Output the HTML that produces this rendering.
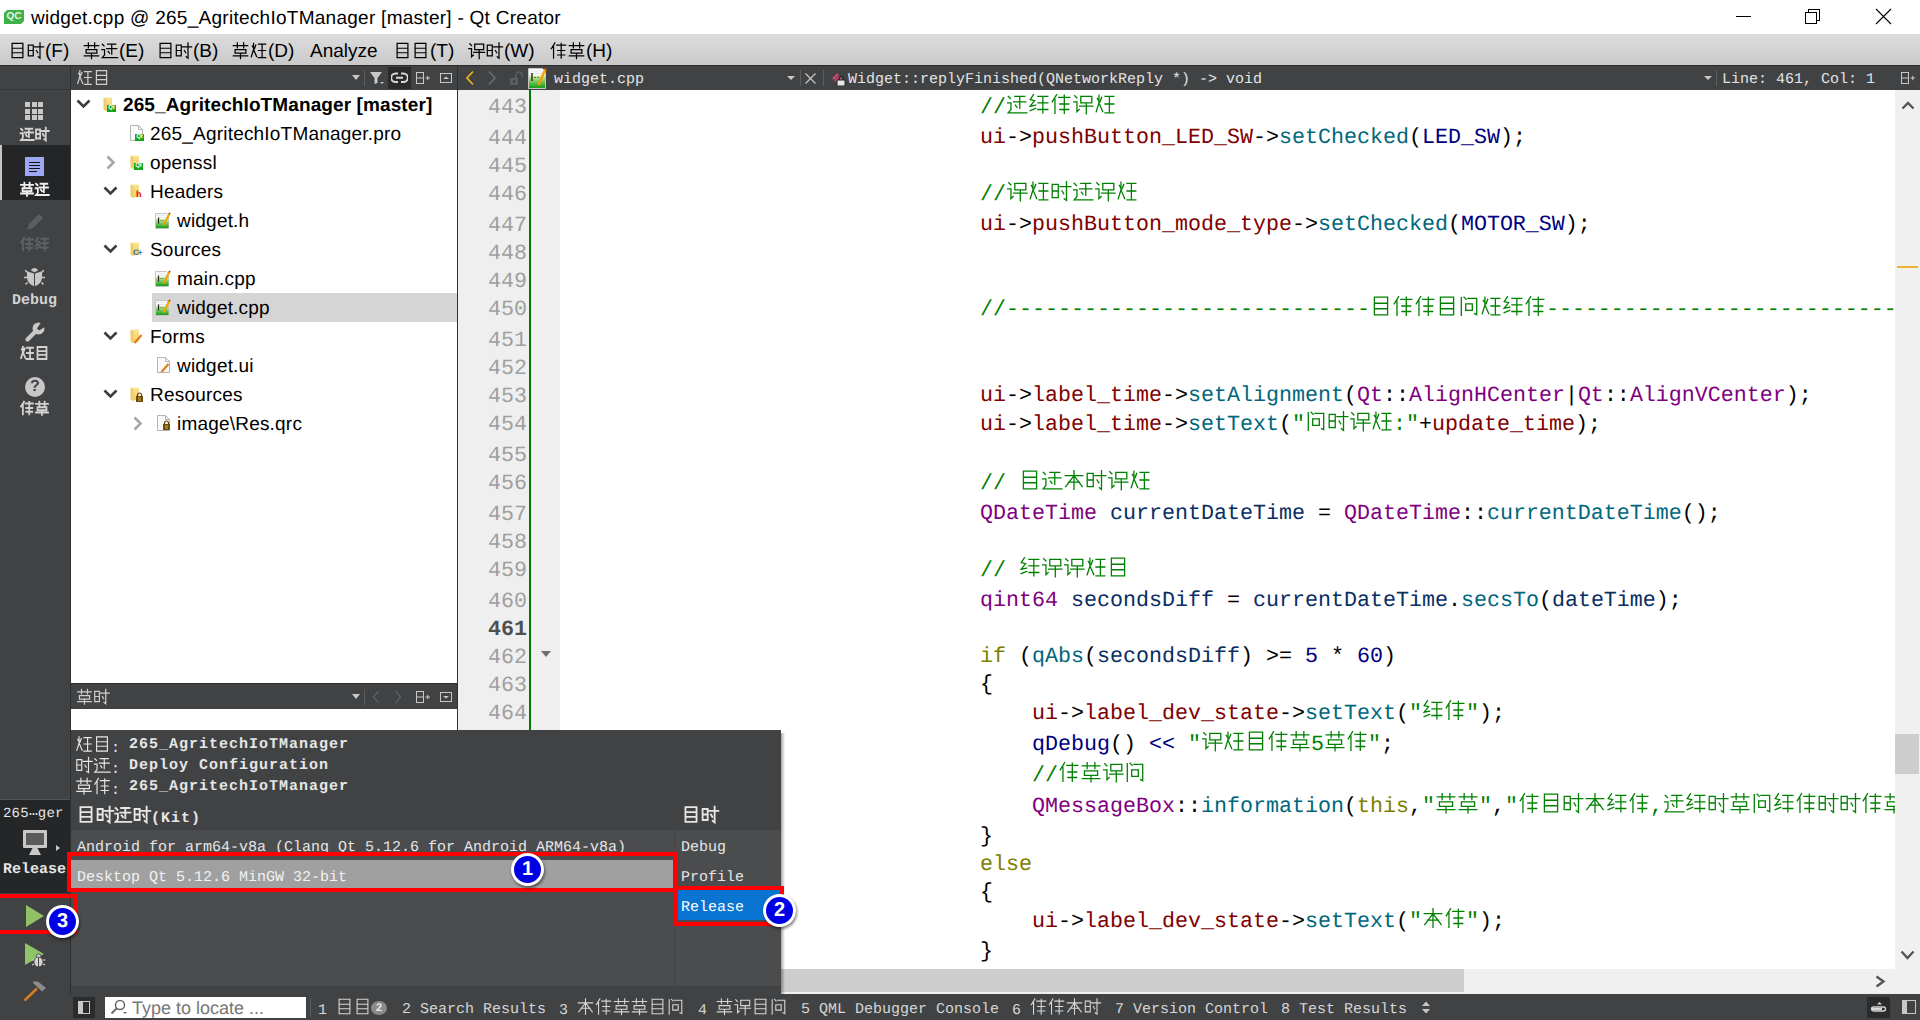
<!DOCTYPE html>
<html><head><meta charset="utf-8"><style>
*{margin:0;padding:0;box-sizing:border-box}
html,body{width:1920px;height:1020px;overflow:hidden;background:#fff;position:relative}
body{font-family:"Liberation Sans",sans-serif;color:#000;text-rendering:geometricPrecision}
.a{position:absolute}
.nw{white-space:nowrap}
.cg{display:inline-block;overflow:visible}
.cr{position:relative;white-space:nowrap}
.ct{position:absolute;left:0;top:0;width:100%;overflow:hidden;color:transparent;font-size:1px;line-height:1px}
.mono{font-family:"Liberation Mono",monospace}
.tb{font-family:"Liberation Mono",monospace;font-size:15px;line-height:25px;color:#e4e4e4;white-space:nowrap}
.code{font-family:"Liberation Mono",monospace;font-size:21.67px;line-height:28px;white-space:pre}
.ln{font-family:"Liberation Mono",monospace;font-size:21.67px;line-height:28px;color:#9f9f9f;text-align:right;width:70px}
.c{color:#008000}
.m{color:#800000}
.f{color:#00677c}
.g{color:#000080}
.t{color:#800080}
.v{color:#092e64}
.k{color:#808000}
.s{color:#008000}
.tr{font-size:19px;line-height:29px;white-space:nowrap;letter-spacing:0.2px}
.pp{font-family:"Liberation Mono",monospace;font-size:15px;line-height:20px;color:#e6e6e6;white-space:pre}
.pb{font-weight:bold;letter-spacing:1px}
.sb{font-family:"Liberation Mono",monospace;font-size:15px;line-height:25px;color:#d6d6d6;white-space:pre}
.badge{position:absolute;width:33px;height:33px;border-radius:50%;background:#fff;box-shadow:1px 2px 3px rgba(0,0,0,.5)}
.badge i{position:absolute;left:3px;top:3px;width:27px;height:27px;border-radius:50%;background:#0000e6;color:#fff;font:bold 20px/27px "Liberation Sans",sans-serif;text-align:center;font-style:normal}
</style></head>
<body>
<svg width="0" height="0" style="position:absolute"><defs><linearGradient id="gg1" x1="0" y1="0" x2="0" y2="1"><stop offset="0" stop-color="#d6efa4"/><stop offset="1" stop-color="#139c13"/></linearGradient><linearGradient id="fg1" x1="0" y1="0" x2="0" y2="1"><stop offset="0" stop-color="#f9e49a"/><stop offset="1" stop-color="#f0cd62"/></linearGradient><symbol id="cg0" viewBox="0 0 20 20" overflow="visible"><path d="M4 2H16V18H4Z M4 7.5H16 M4 12.5H16" fill="none" stroke="currentColor" stroke-linecap="square"/></symbol><symbol id="cg1" viewBox="0 0 20 20" overflow="visible"><path d="M6 1.5L2 8 M4.5 5.5V18.5 M8 4H18 M13 2V18.5 M9 10H17 M9 15H17" fill="none" stroke="currentColor" stroke-linecap="square"/></symbol><symbol id="cg2" viewBox="0 0 20 20" overflow="visible"><path d="M2.5 2.5L4.5 4.5 M1.5 8H4.5V17L6.5 15 M8 3H18V9H8Z M7 12H19 M13 9V19" fill="none" stroke="currentColor" stroke-linecap="square"/></symbol><symbol id="cg3" viewBox="0 0 20 20" overflow="visible"><path d="M2 6H18 M10 1.5V18.5 M10 6L2.5 16 M10 6L17.5 16 M5 12H15" fill="none" stroke="currentColor" stroke-linecap="square"/></symbol><symbol id="cg4" viewBox="0 0 20 20" overflow="visible"><path d="M3 2.5V18.5 M5.5 2L7.5 4 M9 3H17V18L15 17 M7 8H13V14H7Z" fill="none" stroke="currentColor" stroke-linecap="square"/></symbol><symbol id="cg5" viewBox="0 0 20 20" overflow="visible"><path d="M2 4H7.5V16H2Z M2 10H7.5 M9 6H19 M15 1.5V18.5L13 17 M11 10L12.5 12.5" fill="none" stroke="currentColor" stroke-linecap="square"/></symbol><symbol id="cg6" viewBox="0 0 20 20" overflow="visible"><path d="M3 5L5 8 M7 4L5.5 8 M4.5 2V9L2 17 M4.5 9L8 17 M10 3H18 M14 3V18 M10 10H18 M10 18H18" fill="none" stroke="currentColor" stroke-linecap="square"/></symbol><symbol id="cg7" viewBox="0 0 20 20" overflow="visible"><path d="M2 4.5H18 M6.5 1.5V7 M13.5 1.5V7 M4 9H16V13H4Z M2 16H18 M10 13V19" fill="none" stroke="currentColor" stroke-linecap="square"/></symbol><symbol id="cg8" viewBox="0 0 20 20" overflow="visible"><path d="M2 3L4 5 M1.5 9H4.5V15L2 18H19 M8 3H17 M12.5 3V14 M7 8H18 M8.5 11L10 13" fill="none" stroke="currentColor" stroke-linecap="square"/></symbol><symbol id="cg9" viewBox="0 0 20 20" overflow="visible"><path d="M5 1.5L2 6L6 7L2 12L7 11 M2 16L7 14 M9 3H18 M13.5 3V18 M9 9H18 M9 15H18" fill="none" stroke="currentColor" stroke-linecap="square"/></symbol></defs></svg><div class="a" style="left:0;top:0;width:1920px;height:34px;background:#fff"></div><div class="a" style="left:4px;top:10px;width:20px;height:14px;background:#41b24a;clip-path:polygon(3px 0,100% 0,100% 11px,17px 100%,0 100%,0 3px)"></div><div class="a" style="left:5px;top:10px;width:18px;height:14px;color:#e8f5e8;font:bold 10px/14px 'Liberation Sans',sans-serif;text-align:center">QC</div><div class="a nw" id="title" style="left:31px;top:5px;height:28px;font-size:19px;letter-spacing:0.27px;line-height:28px">widget.cpp @ 265_AgritechIoTManager [master] - Qt Creator</div><div class="a" style="left:1736px;top:16px;width:15px;height:1px;background:#000"></div><div class="a" style="left:1808px;top:9px;width:12px;height:12px;border:1px solid #000"></div><div class="a" style="left:1805px;top:12px;width:12px;height:12px;border:1px solid #000;background:#fff"></div><svg class="a" style="left:1875px;top:8px" width="17" height="17"><path d="M1 1L16 16M16 1L1 16" stroke="#000" stroke-width="1.1"/></svg><div class="a" style="left:0;top:34px;width:1920px;height:31px;background:linear-gradient(#dddddd,#c9c9c9)"></div><div class="a nw" style="left:9px;top:38px;height:28px;font-size:19px;line-height:28px"><span class="cr"><svg class="cg" width="18" height="19" viewBox="0.53 0 18.95 20" style="vertical-align:-3px;stroke-width:1.37"><use href="#cg0"/></svg><svg class="cg" width="18" height="19" viewBox="0.53 0 18.95 20" style="vertical-align:-3px;stroke-width:1.37"><use href="#cg5"/></svg><span class="ct">文件</span></span>(F)</div><div class="a nw" style="left:83px;top:38px;height:28px;font-size:19px;line-height:28px"><span class="cr"><svg class="cg" width="18" height="19" viewBox="0.53 0 18.95 20" style="vertical-align:-3px;stroke-width:1.37"><use href="#cg7"/></svg><svg class="cg" width="18" height="19" viewBox="0.53 0 18.95 20" style="vertical-align:-3px;stroke-width:1.37"><use href="#cg8"/></svg><span class="ct">编辑</span></span>(E)</div><div class="a nw" style="left:157px;top:38px;height:28px;font-size:19px;line-height:28px"><span class="cr"><svg class="cg" width="18" height="19" viewBox="0.53 0 18.95 20" style="vertical-align:-3px;stroke-width:1.37"><use href="#cg0"/></svg><svg class="cg" width="18" height="19" viewBox="0.53 0 18.95 20" style="vertical-align:-3px;stroke-width:1.37"><use href="#cg5"/></svg><span class="ct">构建</span></span>(B)</div><div class="a nw" style="left:232px;top:38px;height:28px;font-size:19px;line-height:28px"><span class="cr"><svg class="cg" width="18" height="19" viewBox="0.53 0 18.95 20" style="vertical-align:-3px;stroke-width:1.37"><use href="#cg7"/></svg><svg class="cg" width="18" height="19" viewBox="0.53 0 18.95 20" style="vertical-align:-3px;stroke-width:1.37"><use href="#cg6"/></svg><span class="ct">调试</span></span>(D)</div><div class="a nw" style="left:310px;top:38px;height:28px;font-size:19px;line-height:28px">Analyze</div><div class="a nw" style="left:394px;top:38px;height:28px;font-size:19px;line-height:28px"><span class="cr"><svg class="cg" width="18" height="19" viewBox="0.53 0 18.95 20" style="vertical-align:-3px;stroke-width:1.37"><use href="#cg0"/></svg><svg class="cg" width="18" height="19" viewBox="0.53 0 18.95 20" style="vertical-align:-3px;stroke-width:1.37"><use href="#cg0"/></svg><span class="ct">工具</span></span>(T)</div><div class="a nw" style="left:468px;top:38px;height:28px;font-size:19px;line-height:28px"><span class="cr"><svg class="cg" width="18" height="19" viewBox="0.53 0 18.95 20" style="vertical-align:-3px;stroke-width:1.37"><use href="#cg2"/></svg><svg class="cg" width="18" height="19" viewBox="0.53 0 18.95 20" style="vertical-align:-3px;stroke-width:1.37"><use href="#cg5"/></svg><span class="ct">控件</span></span>(W)</div><div class="a nw" style="left:550px;top:38px;height:28px;font-size:19px;line-height:28px"><span class="cr"><svg class="cg" width="18" height="19" viewBox="0.53 0 18.95 20" style="vertical-align:-3px;stroke-width:1.37"><use href="#cg1"/></svg><svg class="cg" width="18" height="19" viewBox="0.53 0 18.95 20" style="vertical-align:-3px;stroke-width:1.37"><use href="#cg7"/></svg><span class="ct">帮助</span></span>(H)</div><div class="a" style="left:0;top:65px;width:1920px;height:25px;background:#404244"></div><div class="a" style="left:0;top:65px;width:1920px;height:1px;background:#2b2b2b"></div><div class="a" style="left:0;top:90px;width:71px;height:905px;background:#404244"></div><div class="a" style="left:70px;top:65px;width:1px;height:930px;background:#2f3031"></div><div class="a" style="left:0;top:89px;width:71px;height:1px;background:#343537"></div><div class="a" style="left:25.0px;top:102.0px;width:5px;height:5px;background:#c8c8c8"></div><div class="a" style="left:31.5px;top:102.0px;width:5px;height:5px;background:#c8c8c8"></div><div class="a" style="left:38.0px;top:102.0px;width:5px;height:5px;background:#c8c8c8"></div><div class="a" style="left:25.0px;top:108.5px;width:5px;height:5px;background:#c8c8c8"></div><div class="a" style="left:31.5px;top:108.5px;width:5px;height:5px;background:#c8c8c8"></div><div class="a" style="left:38.0px;top:108.5px;width:5px;height:5px;background:#c8c8c8"></div><div class="a" style="left:25.0px;top:115.0px;width:5px;height:5px;background:#c8c8c8"></div><div class="a" style="left:31.5px;top:115.0px;width:5px;height:5px;background:#c8c8c8"></div><div class="a" style="left:38.0px;top:115.0px;width:5px;height:5px;background:#c8c8c8"></div><div class="a nw" style="left:20px;top:126px;height:16px;font-weight:bold;font-size:15px;line-height:16px;color:#d2d2d2"><span class="cr"><svg class="cg" width="15" height="16" viewBox="0.62 0 18.75 20" style="vertical-align:-1px;stroke-width:2.38"><use href="#cg8"/></svg><svg class="cg" width="15" height="16" viewBox="0.62 0 18.75 20" style="vertical-align:-1px;stroke-width:2.38"><use href="#cg5"/></svg><span class="ct">欢迎</span></span></div><div class="a" style="left:0;top:145px;width:70px;height:55px;background:#232526"></div><div class="a" style="left:0;top:145px;width:2px;height:55px;background:#c4c4c4"></div><div class="a" style="left:25px;top:157px;width:19px;height:19px;background:#9da7f3"></div><div class="a" style="left:29px;top:162px;width:11px;height:1px;background:#111"></div><div class="a" style="left:29px;top:165px;width:11px;height:1px;background:#111"></div><div class="a" style="left:29px;top:168px;width:11px;height:1px;background:#111"></div><div class="a" style="left:29px;top:171px;width:8px;height:1px;background:#111"></div><div class="a nw" style="left:20px;top:181px;height:16px;font-weight:bold;font-size:15px;line-height:16px;color:#f0f0f0"><span class="cr"><svg class="cg" width="15" height="16" viewBox="0.62 0 18.75 20" style="vertical-align:-1px;stroke-width:2.38"><use href="#cg7"/></svg><svg class="cg" width="15" height="16" viewBox="0.62 0 18.75 20" style="vertical-align:-1px;stroke-width:2.38"><use href="#cg8"/></svg><span class="ct">编辑</span></span></div><svg class="a" style="left:24px;top:211px" width="22" height="22"><path d="M3 19 L5 13 L15 3 L19 7 L9 17 Z" fill="#5c5d5f"/></svg><div class="a nw" style="left:20px;top:236px;height:16px;font-weight:bold;font-size:15px;line-height:16px;color:#5f6062"><span class="cr"><svg class="cg" width="15" height="16" viewBox="0.62 0 18.75 20" style="vertical-align:-1px;stroke-width:2.38"><use href="#cg1"/></svg><svg class="cg" width="15" height="16" viewBox="0.62 0 18.75 20" style="vertical-align:-1px;stroke-width:2.38"><use href="#cg9"/></svg><span class="ct">设计</span></span></div><svg class="a" style="left:22px;top:264px" width="26" height="26"><path d="M8.7 6.2Q12.5 1.8 16.3 6.2L12.5 8.2Z" fill="#c8c8c8"/><path d="M4.8 7.2L12 9.4V22.2Q5.5 19.5 5 14Z" fill="#c8c8c8"/><path d="M20.2 7.2L13 9.4V22.2Q19.5 19.5 20 14Z" fill="#c8c8c8"/><path d="M5 8L3.2 6.2M20 8L21.8 6.2M5 13.5H2M20 13.5H23M5.5 18.5L3.6 20.3M19.5 18.5L21.4 20.3" stroke="#c8c8c8" stroke-width="1.6"/></svg><div class="a nw" style="left:12px;top:293px;font:bold 15px/16px 'Liberation Mono',monospace;color:#d2d2d2">Debug</div><svg class="a" style="left:24px;top:321px" width="22" height="22"><path d="M3.5 18.5L11.5 10.5" stroke="#c8c8c8" stroke-width="4.2" stroke-linecap="round"/><circle cx="14.5" cy="7.5" r="6" fill="#c8c8c8"/><path d="M13 7.5L17.5 0.5L22.5 5L15 9.5Z" fill="#404244"/></svg><div class="a nw" style="left:20px;top:345px;height:16px;font-weight:bold;font-size:15px;line-height:16px;color:#d2d2d2"><span class="cr"><svg class="cg" width="15" height="16" viewBox="0.62 0 18.75 20" style="vertical-align:-1px;stroke-width:2.38"><use href="#cg6"/></svg><svg class="cg" width="15" height="16" viewBox="0.62 0 18.75 20" style="vertical-align:-1px;stroke-width:2.38"><use href="#cg0"/></svg><span class="ct">项目</span></span></div><div class="a" style="left:25px;top:377px;width:20px;height:20px;border-radius:50%;background:#c8c8c8;color:#404244;font:bold 16px/20px 'Liberation Sans',sans-serif;text-align:center">?</div><div class="a nw" style="left:20px;top:400px;height:16px;font-weight:bold;font-size:15px;line-height:16px;color:#d2d2d2"><span class="cr"><svg class="cg" width="15" height="16" viewBox="0.62 0 18.75 20" style="vertical-align:-1px;stroke-width:2.38"><use href="#cg1"/></svg><svg class="cg" width="15" height="16" viewBox="0.62 0 18.75 20" style="vertical-align:-1px;stroke-width:2.38"><use href="#cg7"/></svg><span class="ct">帮助</span></span></div><div class="a" style="left:0;top:799px;width:70px;height:1px;background:#535456"></div><div class="a" style="left:0;top:800px;width:70px;height:93px;background:#242627"></div><div class="a nw" style="left:3px;top:806px;font:14px/16px 'Liberation Mono',monospace;color:#e6e6e6;letter-spacing:0.2px">265<svg width="9" height="16" style="vertical-align:top"><circle cx="1.5" cy="8" r="1.1" fill="#e6e6e6"/><circle cx="4.5" cy="8" r="1.1" fill="#e6e6e6"/><circle cx="7.5" cy="8" r="1.1" fill="#e6e6e6"/></svg>ger</div><div class="a" style="left:23px;top:830px;width:24px;height:18px;border:3px solid #c8c8c8;background:#5a5b5d;border-radius:1px"></div><div class="a" style="left:29px;top:848px;width:12px;height:7px;background:#c8c8c8;clip-path:polygon(30% 0,70% 0,100% 100%,0 100%)"></div><div class="a" style="left:56px;top:845px;width:0;height:0;border-left:4px solid #c8c8c8;border-top:3px solid transparent;border-bottom:3px solid transparent"></div><div class="a nw" style="left:3px;top:862px;font:bold 15px/16px 'Liberation Mono',monospace;color:#e6e6e6">Release</div><div class="a" style="left:71px;top:90px;width:386px;height:594px;background:#fff"></div><div class="a" style="left:457px;top:65px;width:1px;height:665px;background:#2f3031"></div><div class="a nw" style="left:76px;top:65px;height:25px;font-size:17px;line-height:25px;color:#cfcfcf"><span class="cr"><svg class="cg" width="17" height="17" viewBox="-0.00 0 20.00 20" style="vertical-align:-3px;stroke-width:1.41"><use href="#cg6"/></svg><svg class="cg" width="17" height="17" viewBox="-0.00 0 20.00 20" style="vertical-align:-3px;stroke-width:1.41"><use href="#cg0"/></svg><span class="ct">项目</span></span></div><div class="a" style="left:352px;top:75px;width:0;height:0;border-top:5px solid #c8c8c8;border-left:4px solid transparent;border-right:4px solid transparent"></div><div class="a" style="left:364px;top:70px;width:1px;height:16px;background:#5c5d5f"></div><svg class="a" style="left:369px;top:71px" width="16" height="15"><path d="M1 1H13L8.5 7V12L5.5 13V7Z" fill="#c8c8c8"/><path d="M11 11H15L13 13Z" fill="#c8c8c8"/></svg><div class="a" style="left:388px;top:67px;width:23px;height:22px;background:#2a2b2c"></div><svg class="a" style="left:391px;top:71px" width="17" height="14"><path d="M7 2.5H4.5A4.2 4.2 0 0 0 4.5 11H7M10 2.5H12.5A4.2 4.2 0 0 1 12.5 11H10M5 6.75H12" fill="none" stroke="#d8d8d8" stroke-width="1.9"/></svg><svg class="a" style="left:416px;top:72px" width="15" height="13"><rect x="0.5" y="0.5" width="7" height="11" fill="none" stroke="#c8c8c8"/><path d="M0.5 6H7.5M9.5 6H14M11.7 3.8V8.2" stroke="#c8c8c8"/></svg><svg class="a" style="left:440px;top:73px" width="12" height="11"><rect x="0.5" y="0.5" width="11" height="9" fill="none" stroke="#c8c8c8"/><path d="M3 6L6 3.5L9 6Z" fill="#c8c8c8"/></svg><div class="a" style="left:152px;top:293px;width:305px;height:29px;background:#d5d5d5"></div><svg class="a" style="left:76px;top:99px" width="15" height="10"><path d="M1.5 1.5L7.5 7.5L13.5 1.5" fill="none" stroke="#3c3c3c" stroke-width="2.6"/></svg><svg class="a" style="left:103px;top:97px" width="10" height="15"><path d="M1 0.5H9V12.5L3 13.5Z" fill="url(#fg1)"/><path d="M0.5 0.5L3.5 2.5V14.5L0.5 12.5Z" fill="#efcd6a"/></svg><div class="a" style="left:107px;top:105px;width:9px;height:7px;background:#14a514;color:#fff;font:bold 6px/7px 'Liberation Sans',sans-serif;text-align:center">Qt</div><div class="a tr" style="left:123px;top:91px;font-weight:bold;letter-spacing:0.1px;">265_AgritechIoTManager [master]</div><svg class="a" style="left:130px;top:125px" width="14" height="16"><path d="M0.5 0.5H8.5L12.5 4.5V15.5H0.5Z" fill="#fafafa" stroke="#b4b4b4"/><path d="M8.5 0.5V4.5H12.5" fill="none" stroke="#b4b4b4"/></svg><div class="a" style="left:135px;top:134px;width:9px;height:7px;background:#14a514;color:#fff;font:bold 6px/7px 'Liberation Sans',sans-serif;text-align:center">Qt</div><div class="a tr" style="left:150px;top:120px;">265_AgritechIoTManager.pro</div><svg class="a" style="left:106px;top:155px" width="10" height="15"><path d="M1.5 1.5L7.5 7.5L1.5 13.5" fill="none" stroke="#a6a6a6" stroke-width="2.6"/></svg><svg class="a" style="left:130px;top:155px" width="10" height="15"><path d="M1 0.5H9V12.5L3 13.5Z" fill="url(#fg1)"/><path d="M0.5 0.5L3.5 2.5V14.5L0.5 12.5Z" fill="#efcd6a"/></svg><div class="a" style="left:134px;top:163px;width:9px;height:7px;background:#14a514;color:#fff;font:bold 6px/7px 'Liberation Sans',sans-serif;text-align:center">Qt</div><div class="a tr" style="left:150px;top:149px;">openssl</div><svg class="a" style="left:103px;top:186px" width="15" height="10"><path d="M1.5 1.5L7.5 7.5L13.5 1.5" fill="none" stroke="#3c3c3c" stroke-width="2.6"/></svg><svg class="a" style="left:130px;top:184px" width="10" height="15"><path d="M1 0.5H9V12.5L3 13.5Z" fill="url(#fg1)"/><path d="M0.5 0.5L3.5 2.5V14.5L0.5 12.5Z" fill="#efcd6a"/></svg><div class="a" style="left:136px;top:190px;font:bold 9px/9px 'Liberation Sans',sans-serif;color:#e00000">h</div><div class="a tr" style="left:150px;top:178px;">Headers</div><svg class="a" style="left:155px;top:212px" width="16" height="17"><path d="M0.5 1.5H11.5L13.5 3.5V16.5H0.5Z" fill="#fbfbfb" stroke="#c4c4c4"/><path d="M2 3.5H11M2 5.5H12" stroke="#dde4ee" stroke-width="0.8"/><rect x="1" y="7" width="12.5" height="9" fill="url(#gg1)"/><path d="M3.5 5.5V11.5" stroke="#222" stroke-width="1.2"/><path d="M5.5 8.5H6.5M7.5 8.5H8.5" stroke="#666" stroke-width="0.9"/><path d="M8.5 13.5L14.5 1.5" stroke="#f2a100" stroke-width="2"/><path d="M14 1L15.2 2" stroke="#b03030" stroke-width="1.4"/></svg><div class="a tr" style="left:177px;top:207px;">widget.h</div><svg class="a" style="left:103px;top:244px" width="15" height="10"><path d="M1.5 1.5L7.5 7.5L13.5 1.5" fill="none" stroke="#3c3c3c" stroke-width="2.6"/></svg><svg class="a" style="left:130px;top:242px" width="10" height="15"><path d="M1 0.5H9V12.5L3 13.5Z" fill="url(#fg1)"/><path d="M0.5 0.5L3.5 2.5V14.5L0.5 12.5Z" fill="#efcd6a"/></svg><div class="a" style="left:133px;top:249px;font:bold 8px/8px 'Liberation Sans',sans-serif;color:#2f64a8;letter-spacing:-1px">C+</div><div class="a tr" style="left:150px;top:236px;">Sources</div><svg class="a" style="left:155px;top:270px" width="16" height="17"><path d="M0.5 1.5H11.5L13.5 3.5V16.5H0.5Z" fill="#fbfbfb" stroke="#c4c4c4"/><path d="M2 3.5H11M2 5.5H12" stroke="#dde4ee" stroke-width="0.8"/><rect x="1" y="7" width="12.5" height="9" fill="url(#gg1)"/><path d="M3.5 5.5V11.5" stroke="#222" stroke-width="1.2"/><path d="M5.5 8.5H6.5M7.5 8.5H8.5" stroke="#666" stroke-width="0.9"/><path d="M8.5 13.5L14.5 1.5" stroke="#f2a100" stroke-width="2"/><path d="M14 1L15.2 2" stroke="#b03030" stroke-width="1.4"/></svg><div class="a tr" style="left:177px;top:265px;">main.cpp</div><svg class="a" style="left:155px;top:299px" width="16" height="17"><path d="M0.5 1.5H11.5L13.5 3.5V16.5H0.5Z" fill="#fbfbfb" stroke="#c4c4c4"/><path d="M2 3.5H11M2 5.5H12" stroke="#dde4ee" stroke-width="0.8"/><rect x="1" y="7" width="12.5" height="9" fill="url(#gg1)"/><path d="M3.5 5.5V11.5" stroke="#222" stroke-width="1.2"/><path d="M5.5 8.5H6.5M7.5 8.5H8.5" stroke="#666" stroke-width="0.9"/><path d="M8.5 13.5L14.5 1.5" stroke="#f2a100" stroke-width="2"/><path d="M14 1L15.2 2" stroke="#b03030" stroke-width="1.4"/></svg><div class="a tr" style="left:177px;top:294px;">widget.cpp</div><svg class="a" style="left:103px;top:331px" width="15" height="10"><path d="M1.5 1.5L7.5 7.5L13.5 1.5" fill="none" stroke="#3c3c3c" stroke-width="2.6"/></svg><svg class="a" style="left:130px;top:329px" width="10" height="15"><path d="M1 0.5H9V12.5L3 13.5Z" fill="url(#fg1)"/><path d="M0.5 0.5L3.5 2.5V14.5L0.5 12.5Z" fill="#efcd6a"/></svg><svg class="a" style="left:133px;top:333px" width="10" height="11"><path d="M1.5 10L8.5 2" stroke="#e07b1f" stroke-width="2"/></svg><div class="a tr" style="left:150px;top:323px;">Forms</div><svg class="a" style="left:157px;top:357px" width="14" height="16"><path d="M0.5 0.5H8.5L12.5 4.5V15.5H0.5Z" fill="#fafafa" stroke="#b4b4b4"/><path d="M8.5 0.5V4.5H12.5" fill="none" stroke="#b4b4b4"/></svg><svg class="a" style="left:160px;top:362px" width="10" height="11"><path d="M1.5 10L8.5 2" stroke="#e07b1f" stroke-width="2"/></svg><div class="a tr" style="left:177px;top:352px;">widget.ui</div><svg class="a" style="left:103px;top:389px" width="15" height="10"><path d="M1.5 1.5L7.5 7.5L13.5 1.5" fill="none" stroke="#3c3c3c" stroke-width="2.6"/></svg><svg class="a" style="left:130px;top:387px" width="10" height="15"><path d="M1 0.5H9V12.5L3 13.5Z" fill="url(#fg1)"/><path d="M0.5 0.5L3.5 2.5V14.5L0.5 12.5Z" fill="#efcd6a"/></svg><svg class="a" style="left:135px;top:392px" width="9" height="10"><path d="M2.5 4V3A2 2 0 0 1 6.5 3V4" fill="none" stroke="#5a4008" stroke-width="1.2"/><rect x="1" y="4" width="7" height="6" fill="#6a4d0a"/><path d="M3 6H6M3 8H6" stroke="#e8c040" stroke-width="0.9"/></svg><div class="a tr" style="left:150px;top:381px;">Resources</div><svg class="a" style="left:133px;top:416px" width="10" height="15"><path d="M1.5 1.5L7.5 7.5L1.5 13.5" fill="none" stroke="#a6a6a6" stroke-width="2.6"/></svg><svg class="a" style="left:157px;top:415px" width="14" height="16"><path d="M0.5 0.5H8.5L12.5 4.5V15.5H0.5Z" fill="#fafafa" stroke="#b4b4b4"/><path d="M8.5 0.5V4.5H12.5" fill="none" stroke="#b4b4b4"/></svg><svg class="a" style="left:162px;top:420px" width="9" height="10"><path d="M2.5 4V3A2 2 0 0 1 6.5 3V4" fill="none" stroke="#5a4008" stroke-width="1.2"/><rect x="1" y="4" width="7" height="6" fill="#6a4d0a"/><path d="M3 6H6M3 8H6" stroke="#e8c040" stroke-width="0.9"/></svg><div class="a tr" style="left:177px;top:410px;">image\Res.qrc</div><div class="a" style="left:71px;top:684px;width:386px;height:25px;background:#404244"></div><div class="a" style="left:71px;top:683px;width:386px;height:1px;background:#2f3031"></div><div class="a nw" style="left:76px;top:684px;height:25px;font-size:17px;line-height:25px;color:#cfcfcf"><span class="cr"><svg class="cg" width="17" height="17" viewBox="-0.00 0 20.00 20" style="vertical-align:-3px;stroke-width:1.41"><use href="#cg7"/></svg><svg class="cg" width="17" height="17" viewBox="-0.00 0 20.00 20" style="vertical-align:-3px;stroke-width:1.41"><use href="#cg5"/></svg><span class="ct">书签</span></span></div><div class="a" style="left:352px;top:694px;width:0;height:0;border-top:5px solid #c8c8c8;border-left:4px solid transparent;border-right:4px solid transparent"></div><div class="a" style="left:364px;top:689px;width:1px;height:16px;background:#5c5d5f"></div><svg class="a" style="left:372px;top:690px" width="8" height="14"><path d="M6.5 1L1.5 7L6.5 13" fill="none" stroke="#5f6062" stroke-width="1.3"/></svg><svg class="a" style="left:394px;top:690px" width="8" height="14"><path d="M1.5 1L6.5 7L1.5 13" fill="none" stroke="#5f6062" stroke-width="1.3"/></svg><svg class="a" style="left:416px;top:691px" width="15" height="13"><rect x="0.5" y="0.5" width="7" height="11" fill="none" stroke="#c8c8c8"/><path d="M0.5 6H7.5M9.5 6H14M11.7 3.8V8.2" stroke="#c8c8c8"/></svg><svg class="a" style="left:440px;top:692px" width="12" height="11"><rect x="0.5" y="0.5" width="11" height="9" fill="none" stroke="#c8c8c8"/><path d="M3 4L6 6.5L9 4Z" fill="#c8c8c8"/></svg><div class="a" style="left:71px;top:709px;width:386px;height:21px;background:#fff"></div><svg class="a" style="left:465px;top:70px" width="10" height="16"><path d="M8 1.5L2 8L8 14.5" fill="none" stroke="#e8b21e" stroke-width="1.8"/></svg><svg class="a" style="left:487px;top:70px" width="10" height="16"><path d="M2 1.5L8 8L2 14.5" fill="none" stroke="#6b6c6e" stroke-width="1.8"/></svg><svg class="a" style="left:509px;top:71px" width="16" height="15"><rect x="1" y="7" width="8" height="7" fill="#5c5d5f"/><path d="M7 7V4A3 3 0 0 1 13 4V6" fill="none" stroke="#5c5d5f" stroke-width="1.6"/><rect x="4" y="9" width="2" height="3" fill="#404244"/></svg><svg class="a" style="left:528px;top:67px" width="19" height="22"><path d="M0.5 1.5H14.5L17.5 4.5V21.5H0.5Z" fill="#fbfbfb" stroke="#c4c4c4"/><path d="M2 4H14M2 6.5H16" stroke="#dde4ee" stroke-width="0.9"/><rect x="1" y="8.5" width="16" height="12.5" fill="url(#gg1)"/><path d="M4 6V14" stroke="#222" stroke-width="1.4"/><path d="M6.5 10.5H8M9.5 10.5H11" stroke="#555" stroke-width="1"/><path d="M10.5 18L17.5 2" stroke="#f2a100" stroke-width="2.4"/><path d="M17 1.2L18.3 2.6" stroke="#b03030" stroke-width="1.6"/></svg><div class="a tb" style="left:554px;top:67px">widget.cpp</div><div class="a" style="left:787px;top:76px;width:0;height:0;border-top:4px solid #c8c8c8;border-left:4px solid transparent;border-right:4px solid transparent"></div><div class="a" style="left:800px;top:70px;width:1px;height:16px;background:#5c5d5f"></div><svg class="a" style="left:805px;top:73px" width="11" height="11"><path d="M0.5 0.5L10.5 10.5M10.5 0.5L0.5 10.5" stroke="#c8c8c8" stroke-width="1.2"/></svg><div class="a" style="left:823px;top:70px;width:1px;height:16px;background:#5c5d5f"></div><svg class="a" style="left:831px;top:72px" width="15" height="14"><path d="M2 7L7 2M4 9L9 4M6 11L11 6" stroke="#e0457b" stroke-width="2"/><rect x="6" y="8" width="8" height="6" fill="#e8e8e8" stroke="#222" stroke-width="1"/><path d="M8 8V6A2 2 0 0 1 12 6V8" fill="none" stroke="#222" stroke-width="1.2"/></svg><div class="a tb" style="left:848px;top:67px">Widget::replyFinished(QNetworkReply *) -&gt; void</div><div class="a" style="left:1704px;top:76px;width:0;height:0;border-top:4px solid #c8c8c8;border-left:4px solid transparent;border-right:4px solid transparent"></div><div class="a" style="left:1716px;top:70px;width:1px;height:16px;background:#5c5d5f"></div><div class="a tb" style="left:1722px;top:67px">Line: 461, Col: 1</div><svg class="a" style="left:1901px;top:72px" width="15" height="13"><rect x="0.5" y="0.5" width="7" height="11" fill="none" stroke="#c8c8c8"/><path d="M0.5 6H7.5M9.5 6H14M11.7 3.8V8.2" stroke="#c8c8c8"/></svg><div class="a" style="left:458px;top:90px;width:102px;height:905px;background:#efefef"></div><div class="a" style="left:529px;top:90px;width:2px;height:905px;background:#007b00"></div><div class="a" style="left:560px;top:90px;width:1335px;height:880px;overflow:hidden"><div class="a code" style="left:420px;top:3px"><span class="c">//<span class="cr"><svg class="cg" width="22" height="22" viewBox="-0.00 0 20.00 20" style="vertical-align:-2px;stroke-width:1.18"><use href="#cg8"/></svg><svg class="cg" width="22" height="22" viewBox="-0.00 0 20.00 20" style="vertical-align:-2px;stroke-width:1.18"><use href="#cg9"/></svg><svg class="cg" width="22" height="22" viewBox="-0.00 0 20.00 20" style="vertical-align:-2px;stroke-width:1.18"><use href="#cg1"/></svg><svg class="cg" width="22" height="22" viewBox="-0.00 0 20.00 20" style="vertical-align:-2px;stroke-width:1.18"><use href="#cg2"/></svg><svg class="cg" width="22" height="22" viewBox="-0.00 0 20.00 20" style="vertical-align:-2px;stroke-width:1.18"><use href="#cg6"/></svg><span class="ct">补光灯开关</span></span></span></div><div class="a code" style="left:420px;top:34px"><span class="m">ui</span>-&gt;<span class="m">pushButton_LED_SW</span>-&gt;<span class="f">setChecked</span>(<span class="g">LED_SW</span>);</div><div class="a code" style="left:420px;top:90px"><span class="c">//<span class="cr"><svg class="cg" width="22" height="22" viewBox="-0.00 0 20.00 20" style="vertical-align:-2px;stroke-width:1.18"><use href="#cg2"/></svg><svg class="cg" width="22" height="22" viewBox="-0.00 0 20.00 20" style="vertical-align:-2px;stroke-width:1.18"><use href="#cg6"/></svg><svg class="cg" width="22" height="22" viewBox="-0.00 0 20.00 20" style="vertical-align:-2px;stroke-width:1.18"><use href="#cg5"/></svg><svg class="cg" width="22" height="22" viewBox="-0.00 0 20.00 20" style="vertical-align:-2px;stroke-width:1.18"><use href="#cg8"/></svg><svg class="cg" width="22" height="22" viewBox="-0.00 0 20.00 20" style="vertical-align:-2px;stroke-width:1.18"><use href="#cg2"/></svg><svg class="cg" width="22" height="22" viewBox="-0.00 0 20.00 20" style="vertical-align:-2px;stroke-width:1.18"><use href="#cg6"/></svg><span class="ct">灌溉电机开关</span></span></span></div><div class="a code" style="left:420px;top:121px"><span class="m">ui</span>-&gt;<span class="m">pushButton_mode_type</span>-&gt;<span class="f">setChecked</span>(<span class="g">MOTOR_SW</span>);</div><div class="a code" style="left:420px;top:205px"><span class="c">//----------------------------<span class="cr"><svg class="cg" width="22" height="22" viewBox="-0.00 0 20.00 20" style="vertical-align:-2px;stroke-width:1.18"><use href="#cg0"/></svg><svg class="cg" width="22" height="22" viewBox="-0.00 0 20.00 20" style="vertical-align:-2px;stroke-width:1.18"><use href="#cg1"/></svg><svg class="cg" width="22" height="22" viewBox="-0.00 0 20.00 20" style="vertical-align:-2px;stroke-width:1.18"><use href="#cg1"/></svg><svg class="cg" width="22" height="22" viewBox="-0.00 0 20.00 20" style="vertical-align:-2px;stroke-width:1.18"><use href="#cg0"/></svg><svg class="cg" width="22" height="22" viewBox="-0.00 0 20.00 20" style="vertical-align:-2px;stroke-width:1.18"><use href="#cg4"/></svg><svg class="cg" width="22" height="22" viewBox="-0.00 0 20.00 20" style="vertical-align:-2px;stroke-width:1.18"><use href="#cg6"/></svg><svg class="cg" width="22" height="22" viewBox="-0.00 0 20.00 20" style="vertical-align:-2px;stroke-width:1.18"><use href="#cg9"/></svg><svg class="cg" width="22" height="22" viewBox="-0.00 0 20.00 20" style="vertical-align:-2px;stroke-width:1.18"><use href="#cg1"/></svg><span class="ct">判断设备是否离线</span></span>------------------------------</span></div><div class="a code" style="left:420px;top:292px"><span class="m">ui</span>-&gt;<span class="m">label_time</span>-&gt;<span class="f">setAlignment</span>(<span class="t">Qt</span>::<span class="t">AlignHCenter</span>|<span class="t">Qt</span>::<span class="t">AlignVCenter</span>);</div><div class="a code" style="left:420px;top:320px"><span class="m">ui</span>-&gt;<span class="m">label_time</span>-&gt;<span class="f">setText</span>(<span class="s">"<span class="cr"><svg class="cg" width="22" height="22" viewBox="-0.00 0 20.00 20" style="vertical-align:-2px;stroke-width:1.18"><use href="#cg4"/></svg><svg class="cg" width="22" height="22" viewBox="-0.00 0 20.00 20" style="vertical-align:-2px;stroke-width:1.18"><use href="#cg5"/></svg><svg class="cg" width="22" height="22" viewBox="-0.00 0 20.00 20" style="vertical-align:-2px;stroke-width:1.18"><use href="#cg2"/></svg><svg class="cg" width="22" height="22" viewBox="-0.00 0 20.00 20" style="vertical-align:-2px;stroke-width:1.18"><use href="#cg6"/></svg><span class="ct">最新时间</span></span>:"</span>+<span class="m">update_time</span>);</div><div class="a code" style="left:420px;top:379px"><span class="c">// <span class="cr"><svg class="cg" width="22" height="22" viewBox="-0.00 0 20.00 20" style="vertical-align:-2px;stroke-width:1.18"><use href="#cg0"/></svg><svg class="cg" width="22" height="22" viewBox="-0.00 0 20.00 20" style="vertical-align:-2px;stroke-width:1.18"><use href="#cg8"/></svg><svg class="cg" width="22" height="22" viewBox="-0.00 0 20.00 20" style="vertical-align:-2px;stroke-width:1.18"><use href="#cg3"/></svg><svg class="cg" width="22" height="22" viewBox="-0.00 0 20.00 20" style="vertical-align:-2px;stroke-width:1.18"><use href="#cg5"/></svg><svg class="cg" width="22" height="22" viewBox="-0.00 0 20.00 20" style="vertical-align:-2px;stroke-width:1.18"><use href="#cg2"/></svg><svg class="cg" width="22" height="22" viewBox="-0.00 0 20.00 20" style="vertical-align:-2px;stroke-width:1.18"><use href="#cg6"/></svg><span class="ct">获取当前时间</span></span></span></div><div class="a code" style="left:420px;top:410px"><span class="t">QDateTime</span> <span class="v">currentDateTime</span> = <span class="t">QDateTime</span>::<span class="f">currentDateTime</span>();</div><div class="a code" style="left:420px;top:466px"><span class="c">// <span class="cr"><svg class="cg" width="22" height="22" viewBox="-0.00 0 20.00 20" style="vertical-align:-2px;stroke-width:1.18"><use href="#cg9"/></svg><svg class="cg" width="22" height="22" viewBox="-0.00 0 20.00 20" style="vertical-align:-2px;stroke-width:1.18"><use href="#cg2"/></svg><svg class="cg" width="22" height="22" viewBox="-0.00 0 20.00 20" style="vertical-align:-2px;stroke-width:1.18"><use href="#cg2"/></svg><svg class="cg" width="22" height="22" viewBox="-0.00 0 20.00 20" style="vertical-align:-2px;stroke-width:1.18"><use href="#cg6"/></svg><svg class="cg" width="22" height="22" viewBox="-0.00 0 20.00 20" style="vertical-align:-2px;stroke-width:1.18"><use href="#cg0"/></svg><span class="ct">计算时间差</span></span></span></div><div class="a code" style="left:420px;top:497px"><span class="t">qint64</span> <span class="v">secondsDiff</span> = <span class="v">currentDateTime</span>.<span class="f">secsTo</span>(<span class="v">dateTime</span>);</div><div class="a code" style="left:420px;top:553px"><span class="k">if</span> (<span class="f">qAbs</span>(<span class="v">secondsDiff</span>) &gt;= <span class="g">5</span> * <span class="g">60</span>)</div><div class="a code" style="left:420px;top:581px">{</div><div class="a code" style="left:472px;top:609px"><span class="m">ui</span>-&gt;<span class="m">label_dev_state</span>-&gt;<span class="f">setText</span>(<span class="s">"<span class="cr"><svg class="cg" width="22" height="22" viewBox="-0.00 0 20.00 20" style="vertical-align:-2px;stroke-width:1.18"><use href="#cg9"/></svg><svg class="cg" width="22" height="22" viewBox="-0.00 0 20.00 20" style="vertical-align:-2px;stroke-width:1.18"><use href="#cg1"/></svg><span class="ct">离线</span></span>"</span>);</div><div class="a code" style="left:472px;top:640px"><span class="g">qDebug</span>() <span class="g">&lt;&lt;</span> <span class="s">"<span class="cr"><svg class="cg" width="22" height="22" viewBox="-0.00 0 20.00 20" style="vertical-align:-2px;stroke-width:1.18"><use href="#cg2"/></svg><svg class="cg" width="22" height="22" viewBox="-0.00 0 20.00 20" style="vertical-align:-2px;stroke-width:1.18"><use href="#cg6"/></svg><svg class="cg" width="22" height="22" viewBox="-0.00 0 20.00 20" style="vertical-align:-2px;stroke-width:1.18"><use href="#cg0"/></svg><svg class="cg" width="22" height="22" viewBox="-0.00 0 20.00 20" style="vertical-align:-2px;stroke-width:1.18"><use href="#cg1"/></svg><svg class="cg" width="22" height="22" viewBox="-0.00 0 20.00 20" style="vertical-align:-2px;stroke-width:1.18"><use href="#cg7"/></svg><span class="ct">时间差超过</span></span>5<span class="cr"><svg class="cg" width="22" height="22" viewBox="-0.00 0 20.00 20" style="vertical-align:-2px;stroke-width:1.18"><use href="#cg7"/></svg><svg class="cg" width="22" height="22" viewBox="-0.00 0 20.00 20" style="vertical-align:-2px;stroke-width:1.18"><use href="#cg1"/></svg><span class="ct">分钟</span></span>"</span>;</div><div class="a code" style="left:472px;top:671px"><span class="c">//<span class="cr"><svg class="cg" width="22" height="22" viewBox="-0.00 0 20.00 20" style="vertical-align:-2px;stroke-width:1.18"><use href="#cg1"/></svg><svg class="cg" width="22" height="22" viewBox="-0.00 0 20.00 20" style="vertical-align:-2px;stroke-width:1.18"><use href="#cg7"/></svg><svg class="cg" width="22" height="22" viewBox="-0.00 0 20.00 20" style="vertical-align:-2px;stroke-width:1.18"><use href="#cg2"/></svg><svg class="cg" width="22" height="22" viewBox="-0.00 0 20.00 20" style="vertical-align:-2px;stroke-width:1.18"><use href="#cg4"/></svg><span class="ct">显示状态</span></span></span></div><div class="a code" style="left:472px;top:702px"><span class="t">QMessageBox</span>::<span class="f">information</span>(<span class="k">this</span>,<span class="s">"<span class="cr"><svg class="cg" width="22" height="22" viewBox="-0.00 0 20.00 20" style="vertical-align:-2px;stroke-width:1.18"><use href="#cg7"/></svg><svg class="cg" width="22" height="22" viewBox="-0.00 0 20.00 20" style="vertical-align:-2px;stroke-width:1.18"><use href="#cg7"/></svg><span class="ct">提示</span></span>"</span>,<span class="s">"<span class="cr"><svg class="cg" width="22" height="22" viewBox="-0.00 0 20.00 20" style="vertical-align:-2px;stroke-width:1.18"><use href="#cg1"/></svg><svg class="cg" width="22" height="22" viewBox="-0.00 0 20.00 20" style="vertical-align:-2px;stroke-width:1.18"><use href="#cg0"/></svg><svg class="cg" width="22" height="22" viewBox="-0.00 0 20.00 20" style="vertical-align:-2px;stroke-width:1.18"><use href="#cg5"/></svg><svg class="cg" width="22" height="22" viewBox="-0.00 0 20.00 20" style="vertical-align:-2px;stroke-width:1.18"><use href="#cg3"/></svg><svg class="cg" width="22" height="22" viewBox="-0.00 0 20.00 20" style="vertical-align:-2px;stroke-width:1.18"><use href="#cg9"/></svg><svg class="cg" width="22" height="22" viewBox="-0.00 0 20.00 20" style="vertical-align:-2px;stroke-width:1.18"><use href="#cg1"/></svg><span class="ct">设备可能离线</span></span>,<span class="cr"><svg class="cg" width="22" height="22" viewBox="-0.00 0 20.00 20" style="vertical-align:-2px;stroke-width:1.18"><use href="#cg8"/></svg><svg class="cg" width="22" height="22" viewBox="-0.00 0 20.00 20" style="vertical-align:-2px;stroke-width:1.18"><use href="#cg9"/></svg><svg class="cg" width="22" height="22" viewBox="-0.00 0 20.00 20" style="vertical-align:-2px;stroke-width:1.18"><use href="#cg5"/></svg><svg class="cg" width="22" height="22" viewBox="-0.00 0 20.00 20" style="vertical-align:-2px;stroke-width:1.18"><use href="#cg7"/></svg><svg class="cg" width="22" height="22" viewBox="-0.00 0 20.00 20" style="vertical-align:-2px;stroke-width:1.18"><use href="#cg4"/></svg><svg class="cg" width="22" height="22" viewBox="-0.00 0 20.00 20" style="vertical-align:-2px;stroke-width:1.18"><use href="#cg9"/></svg><svg class="cg" width="22" height="22" viewBox="-0.00 0 20.00 20" style="vertical-align:-2px;stroke-width:1.18"><use href="#cg1"/></svg><svg class="cg" width="22" height="22" viewBox="-0.00 0 20.00 20" style="vertical-align:-2px;stroke-width:1.18"><use href="#cg5"/></svg><svg class="cg" width="22" height="22" viewBox="-0.00 0 20.00 20" style="vertical-align:-2px;stroke-width:1.18"><use href="#cg5"/></svg><svg class="cg" width="22" height="22" viewBox="-0.00 0 20.00 20" style="vertical-align:-2px;stroke-width:1.18"><use href="#cg1"/></svg><svg class="cg" width="22" height="22" viewBox="-0.00 0 20.00 20" style="vertical-align:-2px;stroke-width:1.18"><use href="#cg7"/></svg><span class="ct">距离上次数据更新已超过</span></span>5<span class="cr"><svg class="cg" width="22" height="22" viewBox="-0.00 0 20.00 20" style="vertical-align:-2px;stroke-width:1.18"><use href="#cg7"/></svg><svg class="cg" width="22" height="22" viewBox="-0.00 0 20.00 20" style="vertical-align:-2px;stroke-width:1.18"><use href="#cg1"/></svg><span class="ct">分钟</span></span>"</span></div><div class="a code" style="left:420px;top:733px">}</div><div class="a code" style="left:420px;top:761px"><span class="k">else</span></div><div class="a code" style="left:420px;top:789px">{</div><div class="a code" style="left:472px;top:817px"><span class="m">ui</span>-&gt;<span class="m">label_dev_state</span>-&gt;<span class="f">setText</span>(<span class="s">"<span class="cr"><svg class="cg" width="22" height="22" viewBox="-0.00 0 20.00 20" style="vertical-align:-2px;stroke-width:1.18"><use href="#cg3"/></svg><svg class="cg" width="22" height="22" viewBox="-0.00 0 20.00 20" style="vertical-align:-2px;stroke-width:1.18"><use href="#cg1"/></svg><span class="ct">在线</span></span>"</span>);</div><div class="a code" style="left:420px;top:848px">}</div></div><div class="a ln" style="left:457px;top:94px;">443</div><div class="a ln" style="left:457px;top:125px;">444</div><div class="a ln" style="left:457px;top:153px;">445</div><div class="a ln" style="left:457px;top:181px;">446</div><div class="a ln" style="left:457px;top:212px;">447</div><div class="a ln" style="left:457px;top:240px;">448</div><div class="a ln" style="left:457px;top:268px;">449</div><div class="a ln" style="left:457px;top:296px;">450</div><div class="a ln" style="left:457px;top:327px;">451</div><div class="a ln" style="left:457px;top:355px;">452</div><div class="a ln" style="left:457px;top:383px;">453</div><div class="a ln" style="left:457px;top:411px;">454</div><div class="a ln" style="left:457px;top:442px;">455</div><div class="a ln" style="left:457px;top:470px;">456</div><div class="a ln" style="left:457px;top:501px;">457</div><div class="a ln" style="left:457px;top:529px;">458</div><div class="a ln" style="left:457px;top:557px;">459</div><div class="a ln" style="left:457px;top:588px;">460</div><div class="a ln" style="left:457px;top:616px;color:#505050;font-weight:bold;">461</div><div class="a ln" style="left:457px;top:644px;">462</div><div class="a ln" style="left:457px;top:672px;">463</div><div class="a ln" style="left:457px;top:700px;">464</div><div class="a" style="left:541px;top:651px;width:0;height:0;border-top:6px solid #707070;border-left:5px solid transparent;border-right:5px solid transparent"></div><div class="a" style="left:1895px;top:90px;width:25px;height:880px;background:#f0f0f0"></div><svg class="a" style="left:1901px;top:100px" width="14" height="10"><path d="M1.5 8.5L7 3L12.5 8.5" fill="none" stroke="#555" stroke-width="2.4"/></svg><svg class="a" style="left:1900px;top:950px" width="15" height="11"><path d="M1.5 1.5L7.5 8L13.5 1.5" fill="none" stroke="#555" stroke-width="2.4"/></svg><div class="a" style="left:1895px;top:734px;width:24px;height:40px;background:#cdcdcd"></div><div class="a" style="left:1897px;top:266px;width:21px;height:2px;background:#f0b030"></div><div class="a" style="left:458px;top:969px;width:1462px;height:25px;background:#f0f0f0"></div><div class="a" style="left:470px;top:969px;width:994px;height:23px;background:#cdcdcd"></div><svg class="a" style="left:1875px;top:975px" width="11" height="13"><path d="M1.5 1.5L8.5 6.5L1.5 11.5" fill="none" stroke="#555" stroke-width="2.4"/></svg><div class="a" style="left:781px;top:733px;width:4px;height:261px;background:linear-gradient(90deg,rgba(0,0,0,.35),rgba(0,0,0,0))"></div><div class="a" style="left:71px;top:730px;width:710px;height:264px;background:#414244"></div><div class="a pp" style="left:75px;top:735px"><span class="cr"><svg class="cg" width="18" height="18" viewBox="-0.00 0 20.00 20" style="vertical-align:-1px;stroke-width:1.28"><use href="#cg6"/></svg><svg class="cg" width="18" height="18" viewBox="-0.00 0 20.00 20" style="vertical-align:-1px;stroke-width:1.28"><use href="#cg0"/></svg><span class="ct">项目</span></span>:</div><div class="a pp pb" style="left:129px;top:735px">265_AgritechIoTManager</div><div class="a pp" style="left:75px;top:756px"><span class="cr"><svg class="cg" width="18" height="18" viewBox="-0.00 0 20.00 20" style="vertical-align:-1px;stroke-width:1.28"><use href="#cg5"/></svg><svg class="cg" width="18" height="18" viewBox="-0.00 0 20.00 20" style="vertical-align:-1px;stroke-width:1.28"><use href="#cg8"/></svg><span class="ct">部署</span></span>:</div><div class="a pp pb" style="left:129px;top:756px">Deploy Configuration</div><div class="a pp" style="left:75px;top:777px"><span class="cr"><svg class="cg" width="18" height="18" viewBox="-0.00 0 20.00 20" style="vertical-align:-1px;stroke-width:1.28"><use href="#cg7"/></svg><svg class="cg" width="18" height="18" viewBox="-0.00 0 20.00 20" style="vertical-align:-1px;stroke-width:1.28"><use href="#cg1"/></svg><span class="ct">运行</span></span>:</div><div class="a pp pb" style="left:129px;top:777px">265_AgritechIoTManager</div><div class="a pp pb" style="left:77px;top:805px;line-height:20px"><span class="cr"><svg class="cg" width="18.5" height="19" viewBox="0.26 0 19.47 20" style="vertical-align:-2px;stroke-width:2.00"><use href="#cg0"/></svg><svg class="cg" width="18.5" height="19" viewBox="0.26 0 19.47 20" style="vertical-align:-2px;stroke-width:2.00"><use href="#cg5"/></svg><svg class="cg" width="18.5" height="19" viewBox="0.26 0 19.47 20" style="vertical-align:-2px;stroke-width:2.00"><use href="#cg8"/></svg><svg class="cg" width="18.5" height="19" viewBox="0.26 0 19.47 20" style="vertical-align:-2px;stroke-width:2.00"><use href="#cg5"/></svg><span class="ct">构建套件</span></span>(Kit)</div><div class="a pp pb" style="left:682px;top:805px;line-height:20px"><span class="cr"><svg class="cg" width="18.5" height="19" viewBox="0.26 0 19.47 20" style="vertical-align:-2px;stroke-width:2.00"><use href="#cg0"/></svg><svg class="cg" width="18.5" height="19" viewBox="0.26 0 19.47 20" style="vertical-align:-2px;stroke-width:2.00"><use href="#cg5"/></svg><span class="ct">构建</span></span></div><div class="a" style="left:71px;top:830px;width:710px;height:156px;background:#4b4c4e"></div><div class="a" style="left:674px;top:830px;width:1px;height:156px;background:#414244"></div><div class="a" style="left:71px;top:986px;width:710px;height:8px;background:#414244"></div><div class="a pp" style="left:77px;top:838px">Android for arm64-v8a (Clang Qt 5.12.6 for Android ARM64-v8a)</div><div class="a" style="left:71px;top:860px;width:602px;height:28px;background:#a0a0a0"></div><div class="a pp" style="left:77px;top:868px;color:#f2f2f2">Desktop Qt 5.12.6 MinGW 32-bit</div><div class="a pp" style="left:681px;top:838px">Debug</div><div class="a pp" style="left:681px;top:868px">Profile</div><div class="a" style="left:678px;top:890px;width:103px;height:30px;background:#0a74d3"></div><div class="a pp" style="left:681px;top:898px;color:#fff">Release</div><div class="a" style="left:67px;top:852px;width:610px;height:40px;border:4px solid #ff0000"></div><div class="a" style="left:674px;top:886px;width:110px;height:40px;border:4px solid #ff0000"></div><div class="badge" style="left:511px;top:853px"><i>1</i></div><div class="badge" style="left:763px;top:894px"><i>2</i></div><div class="a" style="left:0;top:994px;width:1920px;height:26px;background:#404244"></div><div class="a" style="left:73px;top:997px;width:22px;height:21px;background:#2a2b2c"></div><div class="a" style="left:78px;top:1001px;width:12px;height:13px;border:1.5px solid #c8c8c8;border-left-width:5px"></div><div class="a" style="left:105px;top:997px;width:201px;height:21px;background:#fff"></div><svg class="a" style="left:110px;top:999px" width="18" height="17"><circle cx="10" cy="6" r="4.5" fill="none" stroke="#666" stroke-width="1.5"/><path d="M7 9L1.5 14.5" stroke="#666" stroke-width="1.8"/><path d="M13 13H17L15 15Z" fill="#666"/></svg><div class="a nw" style="left:132px;top:996px;font-size:18px;line-height:24px;color:#777">Type to locate ...</div><div class="a" style="left:310px;top:998px;width:1px;height:19px;background:#5c5d5f"></div><div class="a sb" style="left:318px;top:997px">1 <span class="cr"><svg class="cg" width="18" height="19" viewBox="0.53 0 18.95 20" style="vertical-align:-2px;stroke-width:1.21"><use href="#cg0"/></svg><svg class="cg" width="18" height="19" viewBox="0.53 0 18.95 20" style="vertical-align:-2px;stroke-width:1.21"><use href="#cg0"/></svg><span class="ct">问题</span></span></div><div class="a sb" style="left:402px;top:997px">2 Search Results</div><div class="a sb" style="left:559px;top:997px">3 <span class="cr"><svg class="cg" width="18" height="19" viewBox="0.53 0 18.95 20" style="vertical-align:-2px;stroke-width:1.21"><use href="#cg3"/></svg><svg class="cg" width="18" height="19" viewBox="0.53 0 18.95 20" style="vertical-align:-2px;stroke-width:1.21"><use href="#cg1"/></svg><svg class="cg" width="18" height="19" viewBox="0.53 0 18.95 20" style="vertical-align:-2px;stroke-width:1.21"><use href="#cg7"/></svg><svg class="cg" width="18" height="19" viewBox="0.53 0 18.95 20" style="vertical-align:-2px;stroke-width:1.21"><use href="#cg7"/></svg><svg class="cg" width="18" height="19" viewBox="0.53 0 18.95 20" style="vertical-align:-2px;stroke-width:1.21"><use href="#cg0"/></svg><svg class="cg" width="18" height="19" viewBox="0.53 0 18.95 20" style="vertical-align:-2px;stroke-width:1.21"><use href="#cg4"/></svg><span class="ct">应用程序输出</span></span></div><div class="a sb" style="left:698px;top:997px">4 <span class="cr"><svg class="cg" width="18" height="19" viewBox="0.53 0 18.95 20" style="vertical-align:-2px;stroke-width:1.21"><use href="#cg7"/></svg><svg class="cg" width="18" height="19" viewBox="0.53 0 18.95 20" style="vertical-align:-2px;stroke-width:1.21"><use href="#cg2"/></svg><svg class="cg" width="18" height="19" viewBox="0.53 0 18.95 20" style="vertical-align:-2px;stroke-width:1.21"><use href="#cg0"/></svg><svg class="cg" width="18" height="19" viewBox="0.53 0 18.95 20" style="vertical-align:-2px;stroke-width:1.21"><use href="#cg4"/></svg><span class="ct">编译输出</span></span></div><div class="a sb" style="left:801px;top:997px">5 QML Debugger Console</div><div class="a sb" style="left:1012px;top:997px">6 <span class="cr"><svg class="cg" width="18" height="19" viewBox="0.53 0 18.95 20" style="vertical-align:-2px;stroke-width:1.21"><use href="#cg1"/></svg><svg class="cg" width="18" height="19" viewBox="0.53 0 18.95 20" style="vertical-align:-2px;stroke-width:1.21"><use href="#cg1"/></svg><svg class="cg" width="18" height="19" viewBox="0.53 0 18.95 20" style="vertical-align:-2px;stroke-width:1.21"><use href="#cg3"/></svg><svg class="cg" width="18" height="19" viewBox="0.53 0 18.95 20" style="vertical-align:-2px;stroke-width:1.21"><use href="#cg5"/></svg><span class="ct">概要信息</span></span></div><div class="a sb" style="left:1115px;top:997px">7 Version Control</div><div class="a sb" style="left:1281px;top:997px">8 Test Results</div><div class="a" style="left:371px;top:1001px;width:16px;height:14px;border-radius:50%;background:#8a8a8a;color:#e8e8e8;font:bold 11px/14px 'Liberation Sans',sans-serif;text-align:center">2</div><svg class="a" style="left:1421px;top:1000px" width="10" height="15"><path d="M1 6L5 1.5L9 6ZM1 9L5 13.5L9 9Z" fill="#c8c8c8"/></svg><div class="a" style="left:1867px;top:997px;width:23px;height:21px;background:#2a2b2c"></div><svg class="a" style="left:1870px;top:1000px" width="17" height="13"><path d="M9.5 2L12 4.5H7Z" fill="#d8d8d8"/><rect x="1.5" y="7" width="14" height="4" rx="2" fill="none" stroke="#d8d8d8" stroke-width="1.3"/><rect x="2" y="8" width="10" height="2" fill="#d8d8d8"/></svg><div class="a" style="left:1902px;top:1000px;width:14px;height:14px;border:1.5px solid #c8c8c8;border-left-width:5px"></div><div class="a" style="left:26px;top:905px;width:18px;height:22px;background:#90c068;clip-path:polygon(0 0,100% 50%,0 100%)"></div><div class="a" style="left:25px;top:943px;width:19px;height:22px;background:#8fc46a;clip-path:polygon(0 0,100% 50%,0 100%)"></div><svg class="a" style="left:31px;top:953px" width="15" height="15"><g fill="#d4d4d4" stroke="#404244" stroke-width="0.8"><ellipse cx="7.5" cy="3" rx="2.5" ry="2"/><ellipse cx="7.5" cy="9" rx="4.5" ry="5"/></g><path d="M7.5 4.5V14" stroke="#404244" stroke-width="1"/><path d="M0.5 7H3M12 7H14.5M1 12L3 11M14 12L12 11" stroke="#d4d4d4" stroke-width="1.2"/></svg><svg class="a" style="left:22px;top:980px" width="26" height="23"><path d="M2.5 20.5L15 8.5" stroke="#d27f1c" stroke-width="2.6"/><path d="M11 1.5H16L24 8L20 11.5L11 3Z" fill="#8c8c8c"/></svg><div class="a" style="left:-4px;top:894px;width:82px;height:40px;border:4px solid #ff0000"></div><div class="badge" style="left:46px;top:905px"><i>3</i></div>
</body></html>
